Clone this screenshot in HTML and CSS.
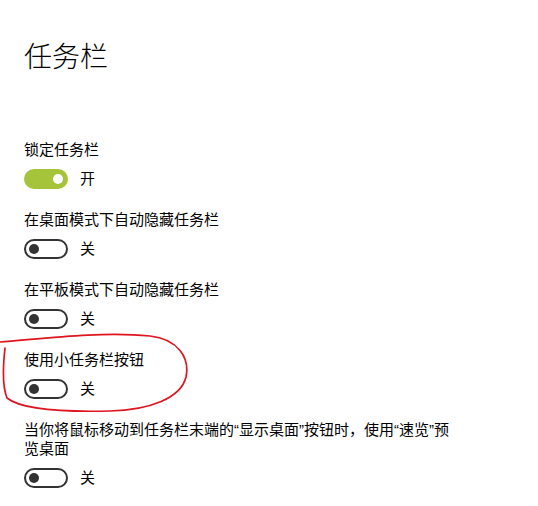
FILE: index.html
```html
<!DOCTYPE html>
<html lang="zh-CN">
  <head>
    <meta charset="UTF-8" />
    <meta name="viewport" content="width=device-width, initial-scale=1.0" />
    <title>任务栏</title>
    <link rel="stylesheet" href="styles.css">
  </head>
  <body>
    <h1 class="title">任务栏</h1>

    <div class="setting">
      <div class="label">锁定任务栏</div>
      <div class="switch">
        <span class="toggle on"></span>
        <span class="state">开</span>
      </div>
    </div>

    <div class="setting">
      <div class="label">在桌面模式下自动隐藏任务栏</div>
      <div class="switch">
        <span class="toggle"></span>
        <span class="state">关</span>
      </div>
    </div>

    <div class="setting">
      <div class="label">在平板模式下自动隐藏任务栏</div>
      <div class="switch">
        <span class="toggle"></span>
        <span class="state">关</span>
      </div>
    </div>

    <div class="setting">
      <div class="label">使用小任务栏按钮</div>
      <div class="switch">
        <span class="toggle"></span>
        <span class="state">关</span>
      </div>
    </div>

    <div class="setting">
      <div class="label wide">当你将鼠标移动到任务栏末端的“显示桌面”按钮时，使用“速览”预览桌面</div>
      <div class="switch">
        <span class="toggle"></span>
        <span class="state">关</span>
      </div>
    </div>

    <!-- hand-drawn marker around the small buttons option -->
    <svg class="scribble" width="538" height="506" viewBox="0 0 538 506">
      <path d="M 0 342 C 40 339, 100 331, 150 336 C 178 339, 190 358, 186 377 C 181 398, 150 410, 110 411 C 70 412, 22 410, 7 398 C 2 386, 3 366, 5 348"
        fill="none" stroke="#e0141e" stroke-width="1.7" stroke-linecap="round" />
    </svg>
  </body>
</html>
```

FILE: styles.css
```css
body {
  margin: 0;
  padding: 38px 24px 0;
  font-family: "Liberation Sans", "Noto Sans CJK SC", sans-serif;
  color: #000;
  background-color: #fff;
  position: relative;
  overflow: hidden;
}

.title {
  font-size: 28px;
  font-weight: 300;
  line-height: 40px;
  margin: 0 0 62px;
}

.setting {
  margin-bottom: 21px;
}

.setting:last-of-type {
  margin-bottom: 0;
}

.label {
  font-size: 15px;
  line-height: 19px;
  margin-bottom: 10px;
}

.label.wide {
  max-width: 432px;
}

.switch {
  display: flex;
  align-items: center;
  gap: 12px;
}

.toggle {
  position: relative;
  width: 44px;
  height: 20px;
  box-sizing: border-box;
  border: 2px solid #333;
  border-radius: 10px;
}

.toggle::after {
  content: "";
  position: absolute;
  top: 3px;
  left: 3px;
  width: 10px;
  height: 10px;
  border-radius: 50%;
  background-color: #333;
}

.toggle.on {
  background-color: #a6c43a;
  border-color: #a6c43a;
}

.toggle.on::after {
  left: auto;
  right: 3px;
  background-color: #fff;
}

.state {
  font-size: 15px;
  line-height: 20px;
}

.scribble {
  position: absolute;
  top: 0;
  left: 0;
  pointer-events: none;
}
```
